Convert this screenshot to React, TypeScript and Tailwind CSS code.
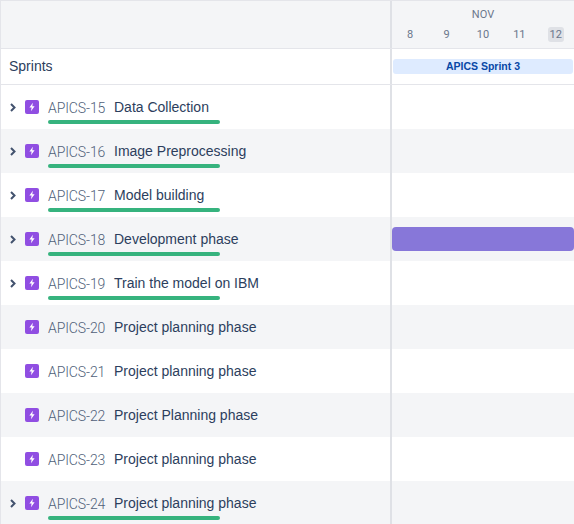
import React from "react";

const rows = [
  { key: "APICS-15", name: "Data Collection", kids: true },
  { key: "APICS-16", name: "Image Preprocessing", kids: true },
  { key: "APICS-17", name: "Model building", kids: true },
  { key: "APICS-18", name: "Development phase", kids: true, bar: true },
  { key: "APICS-19", name: "Train the model on IBM", kids: true },
  { key: "APICS-20", name: "Project planning phase" },
  { key: "APICS-21", name: "Project planning phase" },
  { key: "APICS-22", name: "Project Planning phase" },
  { key: "APICS-23", name: "Project planning phase" },
  { key: "APICS-24", name: "Project planning phase", kids: true },
];

const days = ["8", "9", "10", "11", "12"];

const EpicIcon = () => (
  <svg width="14" height="14" viewBox="0 0 14 14" className="shrink-0">
    <rect width="14" height="14" rx="2" fill="#904EE2" />
    <path d="M7.9 2.8 4.4 7.6h2.2L6 11.2l3.6-4.9H7.3z" fill="#fff" />
  </svg>
);

const Chevron = () => (
  <svg width="7" height="9" viewBox="0 0 7 9" className="shrink-0">
    <path d="M1 1 4.5 4.5 1 8" fill="none" stroke="#42526E" strokeWidth="2" />
  </svg>
);

const App: React.FC = () => {
  return (
    <div className="h-[524px] w-[574px] overflow-hidden border-l border-t border-[#e4e5ea] bg-white font-['Liberation_Sans',sans-serif]">
      <div className="flex h-[47px] bg-[#f4f5f7]">
        <div className="w-[389px]" />
        <div className="flex-1 border-l-2 border-[#dfe1e6] font-['Roboto',sans-serif] text-[#6b778c]">
          <div className="pt-[7px] text-center text-[11px] leading-[14px]">NOV</div>
          <div className="mt-[5px] flex text-[11px] leading-[15px]">
            {days.map((d) => (
              <div key={d} className="flex w-[36.4px] justify-center">
                <span className={d === "12" ? "rounded-[3px] bg-[#dfe1e6] px-[2px]" : ""}>{d}</span>
              </div>
            ))}
          </div>
        </div>
      </div>

      <div className="flex h-[37px] border-y border-[#e4e5ea]">
        <div className="w-[389px] pl-[8px] text-[14px] leading-[34px] text-[#2c3e5d]">Sprints</div>
        <div className="flex flex-1 items-center border-l-2 border-[#dfe1e6] px-px">
          <div className="h-[15px] w-full rounded-[3px] bg-[#deebff] text-center text-[10.5px] font-bold leading-[15px] text-[#0747a6]">
            APICS Sprint 3
          </div>
        </div>
      </div>

      {rows.map((r, i) => (
        <div key={r.key} className={`flex h-[44px] shrink-0 ${i % 2 === 1 ? "bg-[#f4f5f7]" : "bg-white"}`}>
          <div className="w-[389px] pt-[15px]">
            <div className="flex h-[14px] items-center">
              <div className="flex w-[24px] justify-center">{r.kids && <Chevron />}</div>
              <EpicIcon />
              <span className="ml-[9px] mt-[2px] w-[66px] font-['Roboto',sans-serif] text-[14px] font-light tracking-[-0.1px] text-[#505f79]">
                {r.key}
              </span>
              <span className="text-[14px] text-[#2c3e5d]">{r.name}</span>
            </div>
            {r.kids && <div className="ml-[47px] mt-[6px] h-[4px] w-[172px] rounded-full bg-[#36b37e]" />}
          </div>
          <div className="flex-1 border-l-2 border-[#dfe1e6] pt-[10px]">
            {r.bar && <div className="h-[24px] rounded-[4px] bg-[#8777d9]" />}
          </div>
        </div>
      ))}
    </div>
  );
};

export default App;
